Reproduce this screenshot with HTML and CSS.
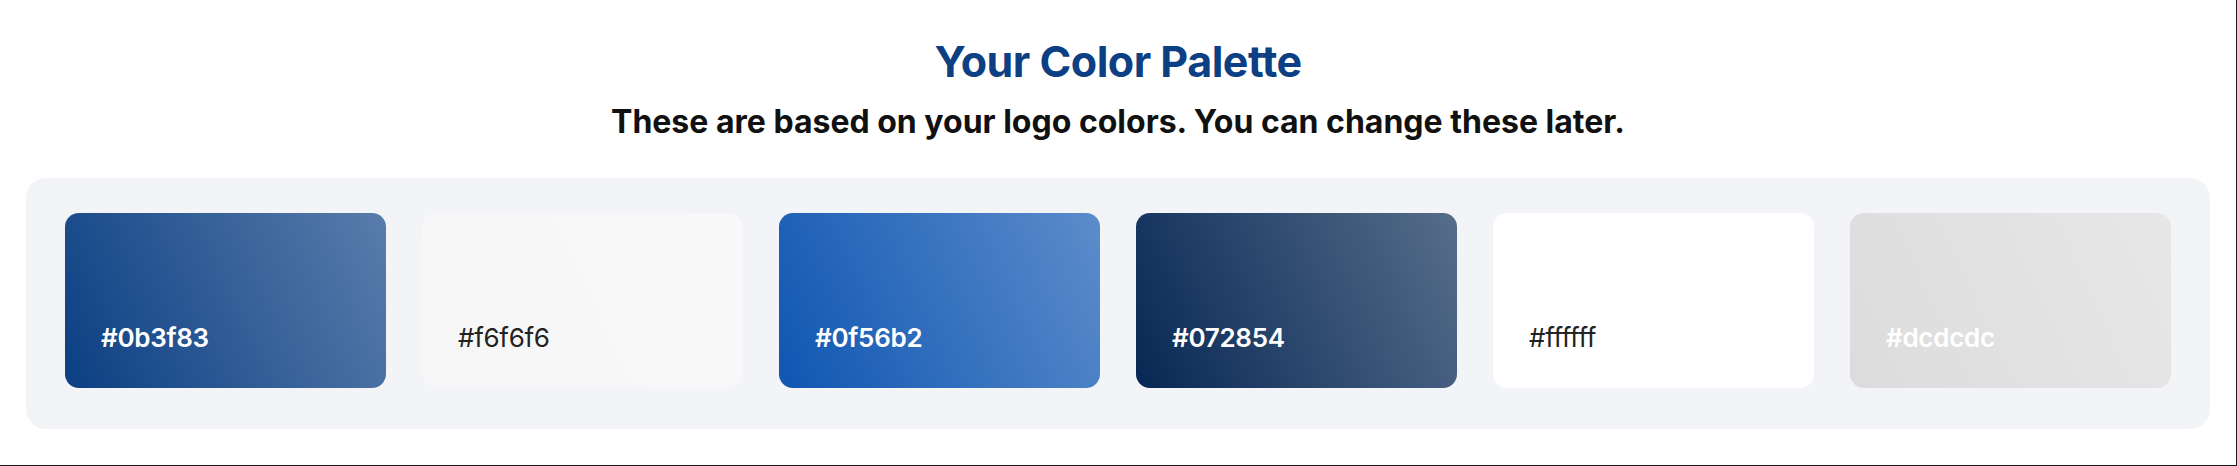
FILE: index.html
```html
<!DOCTYPE html>
<html lang="en">
<head>
<meta charset="utf-8">
<title>Your Color Palette</title>
<link rel="stylesheet" href="styles.css">
</head>
<body>
<main class="page">
  <h1 class="title">Your Color Palette</h1>
  <p class="subtitle">These are based on your logo colors. You can change these later.</p>
  <section class="palette">
    <div class="swatch swatch-dark" style="background-color:#0b3f83"><span class="hex">#0b3f83</span></div>
    <div class="swatch swatch-light" style="background-color:#f6f6f6"><span class="hex">#f6f6f6</span></div>
    <div class="swatch swatch-dark" style="background-color:#0f56b2"><span class="hex">#0f56b2</span></div>
    <div class="swatch swatch-dark" style="background-color:#072854"><span class="hex">#072854</span></div>
    <div class="swatch swatch-light" style="background-color:#ffffff"><span class="hex">#ffffff</span></div>
    <div class="swatch swatch-dark" style="background-color:#dcdcdc"><span class="hex">#dcdcdc</span></div>
  </section>
</main>
</body>
</html>
```
FILE: styles.css
```css
* { box-sizing: border-box; }
html, body { margin: 0; padding: 0; background: #fff; }
body { font-family: "Inter", "Lato", sans-serif; }

.page {
  width: 2237px;
  height: 466px;
  border-right: 1px solid #1a1a1a;
  border-bottom: 1px solid #1a1a1a;
  padding: 37px 26px 0 26px;
  display: flex;
  flex-direction: column;
  align-items: stretch;
}

.title {
  margin: 0;
  text-align: center;
  font-size: 43px;
  line-height: 48px;
  font-weight: 700;
  letter-spacing: -0.5px;
  color: #0d3f84;
}

.subtitle {
  margin: 17px 0 0 0;
  text-align: center;
  font-size: 32px;
  line-height: 40px;
  font-weight: 700;
  color: #111;
}

.palette {
  margin-top: 36px;
  background: #f3f4f7;
  border-radius: 20px;
  padding: 35px 39px 41px 39px;
  display: grid;
  grid-template-columns: repeat(6, 1fr);
  gap: 36px;
}

.swatch {
  height: 175px;
  border-radius: 14px;
  background-image: linear-gradient(65deg, rgba(255,255,255,0) 0%, rgba(255,255,255,0.32) 100%);
  display: flex;
  align-items: flex-end;
  padding: 0 0 35px 36px;
}

.hex {
  font-size: 26px;
  line-height: 30px;
  font-weight: 600;
  letter-spacing: -0.3px;
}

.swatch-dark .hex { color: #fff; }
.swatch-light .hex { color: #222; font-weight: 400; }
```
